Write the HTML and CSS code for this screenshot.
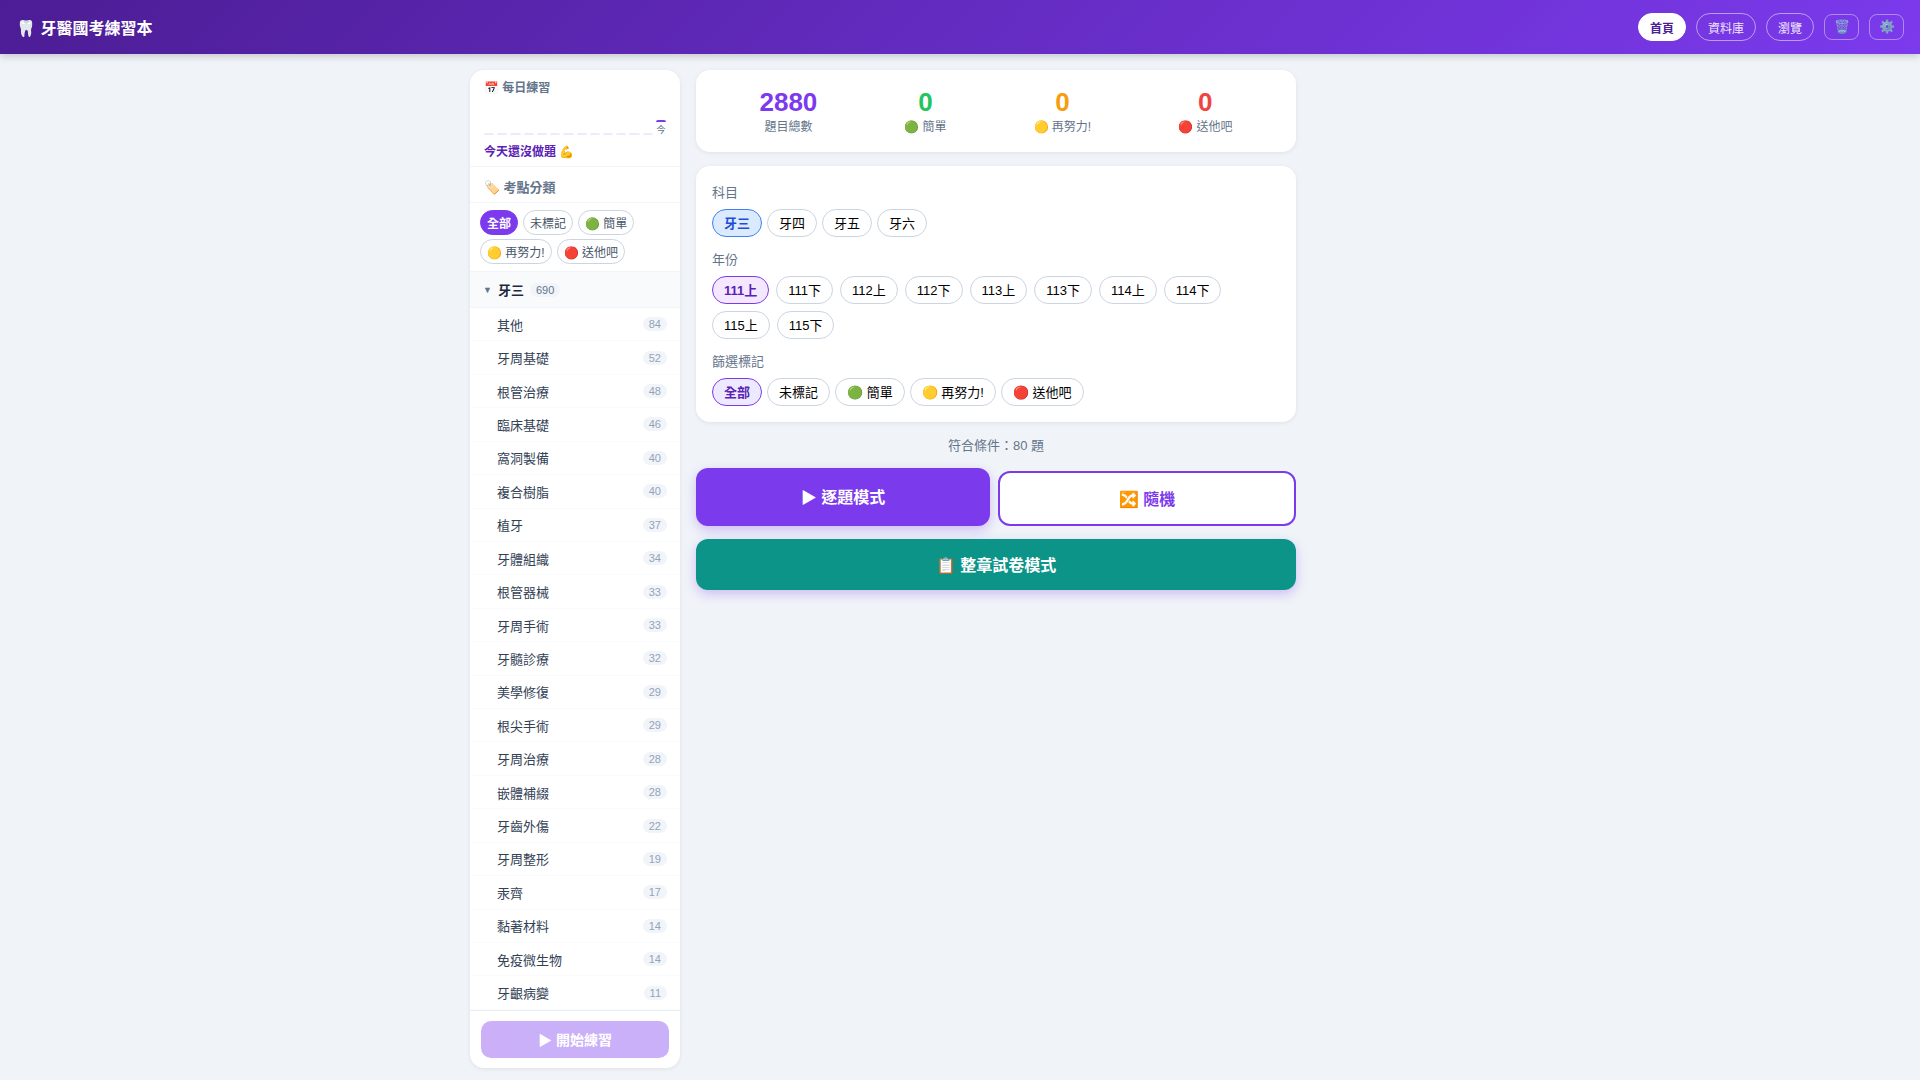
FILE: index.html
```html
<!DOCTYPE html>
<html lang="zh-TW">
<head>
    <meta charset="UTF-8">
    <meta name="viewport" content="width=device-width, initial-scale=1.0">
    <title>牙醫國考練習本</title>
    <link rel="stylesheet" href="styles.css">
</head>
<body>
    <header class="topbar">
        <h1>🦷 牙醫國考練習本</h1>
        <nav>
            <button class="nav-btn active">首頁</button>
            <button class="nav-btn">資料庫</button>
            <button class="nav-btn">瀏覽</button>
            <button class="icon-btn" aria-label="清除紀錄">🗑️</button>
            <button class="icon-btn" aria-label="設定">⚙️</button>
        </nav>
    </header>

    <div class="layout">
        <!-- Sidebar -->
        <aside class="sidebar">
            <section class="daily">
                <h2>📅 每日練習</h2>
                <div class="daily-chart">
                    <div class="day"></div>
                    <div class="day"></div>
                    <div class="day"></div>
                    <div class="day"></div>
                    <div class="day"></div>
                    <div class="day"></div>
                    <div class="day"></div>
                    <div class="day"></div>
                    <div class="day"></div>
                    <div class="day"></div>
                    <div class="day"></div>
                    <div class="day"></div>
                    <div class="day"></div>
                    <div class="day today"><span>今</span></div>
                </div>
                <p>今天還沒做題 💪</p>
            </section>

            <h2 class="topic-title">🏷️ 考點分類</h2>
            <div class="topic-filter">
                <button class="mini-chip active">全部</button>
                <button class="mini-chip">未標記</button>
                <button class="mini-chip">🟢 簡單</button>
                <button class="mini-chip">🟡 再努力!</button>
                <button class="mini-chip">🔴 送他吧</button>
            </div>

            <button class="group-head">
                <span class="arrow">▼</span>
                <strong>牙三</strong>
                <span class="badge">690</span>
            </button>
            <div class="topic-list">
                <button class="topic">其他<span class="badge">84</span></button>
                <button class="topic">牙周基礎<span class="badge">52</span></button>
                <button class="topic">根管治療<span class="badge">48</span></button>
                <button class="topic">臨床基礎<span class="badge">46</span></button>
                <button class="topic">窩洞製備<span class="badge">40</span></button>
                <button class="topic">複合樹脂<span class="badge">40</span></button>
                <button class="topic">植牙<span class="badge">37</span></button>
                <button class="topic">牙體組織<span class="badge">34</span></button>
                <button class="topic">根管器械<span class="badge">33</span></button>
                <button class="topic">牙周手術<span class="badge">33</span></button>
                <button class="topic">牙髓診療<span class="badge">32</span></button>
                <button class="topic">美學修復<span class="badge">29</span></button>
                <button class="topic">根尖手術<span class="badge">29</span></button>
                <button class="topic">牙周治療<span class="badge">28</span></button>
                <button class="topic">嵌體補綴<span class="badge">28</span></button>
                <button class="topic">牙齒外傷<span class="badge">22</span></button>
                <button class="topic">牙周整形<span class="badge">19</span></button>
                <button class="topic">汞齊<span class="badge">17</span></button>
                <button class="topic">黏著材料<span class="badge">14</span></button>
                <button class="topic">免疫微生物<span class="badge">14</span></button>
                <button class="topic">牙齦病變<span class="badge">11</span></button>
            </div>
            <div class="sidebar-foot">
                <button class="start-btn" disabled>▶ 開始練習</button>
            </div>
        </aside>

        <!-- Main -->
        <main>
            <section class="card stats">
                <div class="stat"><b class="total">2880</b><span>題目總數</span></div>
                <div class="stat"><b class="easy">0</b><span>🟢 簡單</span></div>
                <div class="stat"><b class="medium">0</b><span>🟡 再努力!</span></div>
                <div class="stat"><b class="hard">0</b><span>🔴 送他吧</span></div>
            </section>

            <section class="card filters">
                <h3>科目</h3>
                <div class="chips">
                    <button class="chip subject-on">牙三</button>
                    <button class="chip">牙四</button>
                    <button class="chip">牙五</button>
                    <button class="chip">牙六</button>
                </div>
                <h3>年份</h3>
                <div class="chips years">
                    <button class="chip year-on">111上</button>
                    <button class="chip">111下</button>
                    <button class="chip">112上</button>
                    <button class="chip">112下</button>
                    <button class="chip">113上</button>
                    <button class="chip">113下</button>
                    <button class="chip">114上</button>
                    <button class="chip">114下</button>
                    <button class="chip">115上</button>
                    <button class="chip">115下</button>
                </div>
                <h3>篩選標記</h3>
                <div class="chips">
                    <button class="chip mark-on">全部</button>
                    <button class="chip">未標記</button>
                    <button class="chip">🟢 簡單</button>
                    <button class="chip">🟡 再努力!</button>
                    <button class="chip">🔴 送他吧</button>
                </div>
            </section>

            <p class="match-count">符合條件：80 題</p>

            <div class="mode-row">
                <button class="mode-btn primary">▶ 逐題模式</button>
                <button class="mode-btn outline">🔀 隨機</button>
            </div>
            <button class="mode-btn exam">📋 整章試卷模式</button>
        </main>
    </div>
</body>
</html>
```
FILE: styles.css
```css
* {
    box-sizing: border-box;
    margin: 0;
    padding: 0;
}

body {
    font-family: "Liberation Sans", "Noto Sans CJK TC", sans-serif;
    background: #f0f4f8;
    color: #1e293b;
    min-height: 100vh;
}

button {
    font-family: inherit;
    cursor: pointer;
}

/* Top bar */
.topbar {
    height: 54px;
    padding: 0 16px;
    display: flex;
    align-items: center;
    justify-content: space-between;
    background: linear-gradient(135deg, #4c1d95, #7c3aed);
    color: white;
    box-shadow: 0 2px 8px rgba(0, 0, 0, 0.2);
}

.topbar h1 {
    font-size: 16px;
}

.topbar nav {
    display: flex;
    align-items: center;
    gap: 10px;
}

.nav-btn {
    height: 28px;
    padding: 0 11px;
    border: 1px solid rgba(255, 255, 255, 0.5);
    border-radius: 20px;
    background: transparent;
    color: rgba(255, 255, 255, 0.9);
    font-size: 12px;
}

.nav-btn.active {
    background: white;
    border-color: white;
    color: #4c1d95;
    font-weight: 700;
}

.icon-btn {
    width: 35px;
    height: 26px;
    padding-bottom: 2px;
    border: 1px solid rgba(255, 255, 255, 0.4);
    border-radius: 8px;
    background: transparent;
    font-size: 13px;
    color: rgba(255, 255, 255, 0.9);
}

.layout {
    max-width: 980px;
    margin: 16px auto 0;
    display: flex;
    align-items: flex-start;
    gap: 16px;
}

/* Sidebar */
.sidebar {
    width: 210px;
    height: calc(100vh - 82px);
    flex-shrink: 0;
    display: flex;
    flex-direction: column;
    background: white;
    border-radius: 14px;
    box-shadow: 0 1px 4px rgba(0, 0, 0, 0.08);
    overflow: hidden;
}

.daily {
    padding: 9px 14px 4px;
    border-bottom: 1px solid #f1f5f9;
}

.daily h2 {
    font-size: 12px;
    line-height: 18px;
    color: #64748b;
}

.daily-chart {
    height: 38px;
    display: flex;
    align-items: flex-end;
    gap: 3px;
}

.day {
    flex: 1;
}

.day::before {
    content: "";
    display: block;
    height: 2px;
    border-radius: 2px 2px 0 0;
    background: #ede9fe;
}

.day.today::before {
    background: #7c3aed;
}

.day span {
    display: block;
    font-size: 9px;
    line-height: 10px;
    margin-top: 3px;
    text-align: center;
    color: #64748b;
}

.daily p {
    margin-top: 8px;
    font-size: 12px;
    line-height: 19px;
    font-weight: 700;
    color: #5b21b6;
}

.topic-title {
    padding: 12px 14px 5px;
    font-size: 13px;
    line-height: 18px;
    color: #64748b;
    border-bottom: 1px solid #f1f5f9;
}

.topic-filter {
    display: flex;
    flex-wrap: wrap;
    gap: 4px 5px;
    padding: 7px 10px;
    border-bottom: 1px solid #f1f5f9;
}

.mini-chip {
    height: 25px;
    padding: 0 6px;
    border: 1px solid #cbd5e1;
    border-radius: 20px;
    background: white;
    color: #475569;
    font-size: 12px;
}

.mini-chip.active {
    background: #7c3aed;
    border-color: #7c3aed;
    color: white;
    font-weight: 700;
}

.group-head {
    height: 36px;
    flex-shrink: 0;
    display: flex;
    align-items: center;
    gap: 6px;
    padding: 0 13px;
    border: none;
    border-bottom: 1px solid #f1f5f9;
    background: #f8fafc;
    color: #1e293b;
    font-size: 13px;
}

.group-head .arrow {
    font-size: 9px;
    color: #64748b;
}

.group-head .badge {
    color: #64748b;
}

.badge {
    padding: 0 6px;
    border-radius: 10px;
    background: #f1f5f9;
    color: #94a3b8;
    font-size: 11px;
    line-height: 14px;
}

.topic-list {
    flex: 1;
    min-height: 0;
    display: flex;
    flex-direction: column;
    overflow-y: auto;
}

.topic {
    flex: 1 0 auto;
    display: flex;
    align-items: center;
    justify-content: space-between;
    padding: 0 13px 0 25px;
    border: none;
    border-left: 2px solid transparent;
    border-bottom: 1px solid #f8fafc;
    background: none;
    color: #334155;
    font-size: 13px;
}

.sidebar-foot {
    padding: 10px 11px;
    border-top: 1px solid #e8eef5;
}

.start-btn {
    width: 100%;
    height: 37px;
    padding-bottom: 2px;
    border: none;
    border-radius: 10px;
    background: #7c3aed;
    color: white;
    font-size: 14px;
    font-weight: 700;
    opacity: 0.4;
}

/* Main */
main {
    flex: 1;
    min-width: 0;
    max-width: 600px;
}

.card {
    background: white;
    border-radius: 14px;
    box-shadow: 0 1px 4px rgba(0, 0, 0, 0.08);
    margin-bottom: 14px;
}

.stats {
    display: flex;
    justify-content: space-around;
    padding: 16px 20px;
    text-align: center;
}

.stat b {
    display: block;
    font-size: 26px;
    line-height: 32px;
}

.stat span {
    display: block;
    font-size: 12px;
    line-height: 18px;
    color: #64748b;
}

.total { color: #7c3aed; }
.easy { color: #22c55e; }
.medium { color: #f59e0b; }
.hard { color: #ef4444; }

.filters {
    padding: 17px 16px 16px;
}

.filters h3 {
    margin-bottom: 6px;
    font-size: 13px;
    line-height: 20px;
    font-weight: 400;
    color: #64748b;
}

.chips {
    display: flex;
    flex-wrap: wrap;
    gap: 7px 5px;
    margin-bottom: 13px;
}

.chips.years {
    column-gap: 7px;
}

.chips:last-child {
    margin-bottom: 0;
}

.chip {
    height: 28px;
    padding: 0 11px 2px;
    border: 1px solid #cbd5e1;
    border-radius: 20px;
    background: white;
    color: black;
    font-size: 13px;
}

.subject-on {
    background: #dbeafe;
    border-color: #3b82f6;
    color: #1d4ed8;
    font-weight: 700;
}

.year-on {
    background: #f3e8ff;
    border-color: #7c3aed;
    color: #5b21b6;
    font-weight: 700;
}

.mark-on {
    background: #ede9fe;
    border-color: #7c3aed;
    color: #5b21b6;
    font-weight: 700;
}

.match-count {
    margin-bottom: 12px;
    font-size: 13px;
    line-height: 20px;
    text-align: center;
    color: #64748b;
}

.mode-row {
    display: flex;
    align-items: flex-end;
    gap: 8px;
    margin-bottom: 13px;
}

.mode-btn {
    padding-bottom: 2px;
    border: none;
    border-radius: 12px;
    font-size: 16px;
    font-weight: 700;
    color: white;
}

.primary {
    flex: 1;
    height: 58px;
    background: #7c3aed;
    box-shadow: 0 4px 12px rgba(124, 58, 237, 0.3);
}

.outline {
    flex: 1;
    height: 55px;
    border: 2px solid #7c3aed;
    background: white;
    color: #7c3aed;
}

.exam {
    width: 100%;
    height: 51px;
    background: #0d9488;
    box-shadow: 0 4px 12px rgba(124, 58, 237, 0.3);
}
```
